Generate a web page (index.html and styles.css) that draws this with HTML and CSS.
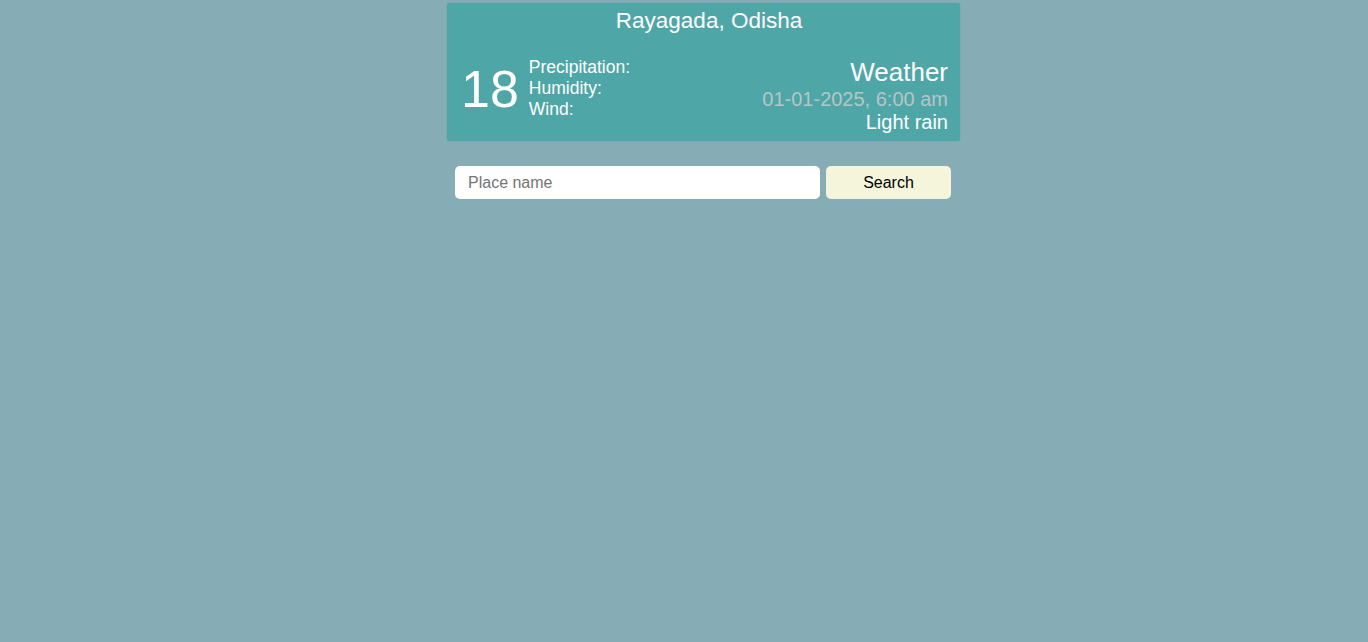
FILE: index.html
```html
<!DOCTYPE html>
<html>
<head>
<meta charset="utf-8">
<link rel="stylesheet" href="styles.css">
</head>
<body>
<div class="app">
  <div class="card">
    <div class="place">Rayagada, Odisha</div>
    <div class="body">
      <div class="temp">18</div>
      <div class="details">
        <div>Precipitation:</div>
        <div>Humidity:</div>
        <div>Wind:</div>
      </div>
      <div class="summary">
        <div class="title">Weather</div>
        <div class="date">01-01-2025, 6:00 am</div>
        <div class="desc">Light rain</div>
      </div>
    </div>
  </div>
  <form class="search" onsubmit="return false">
    <input class="field" type="text" placeholder="Place name">
    <button class="btn" type="submit">Search</button>
  </form>
</div>
</body>
</html>
```
FILE: styles.css
```css
html, body {
  margin: 0;
  padding: 0;
  background: #86adb6;
  font-family: "Liberation Sans", Arial, sans-serif;
  height: 100%;
}
.app {
  width: 513px;
  margin-left: 447px;
  padding-top: 3px;
}
.card {
  background: #4fa6a7;
  color: #ffffff;
  border-radius: 2px;
  box-shadow: 0 0 2px rgba(0,0,0,0.12);
  height: 138px;
  box-sizing: border-box;
  padding: 5px 12px 0 14px;
}
.place {
  font-size: 22.5px;
  line-height: 26px;
  text-align: center;
  padding-left: 9px;
}
.body {
  display: flex;
  align-items: flex-start;
  margin-top: 23px;
}
.temp {
  font-size: 52px;
  line-height: 60px;
  margin-top: 2px;
  margin-right: 11px;
}
.details {
  font-size: 17.5px;
  line-height: 21px;
  flex: 1;
  margin-left: -1px;
}
.summary {
  text-align: right;
}
.title {
  font-size: 26px;
  line-height: 30px;
  margin-top: 0;
}
.date {
  font-size: 20px;
  line-height: 24px;
  color: #b5c6c6;
}
.desc {
  font-size: 20px;
  line-height: 22px;
}
.search {
  display: flex;
  gap: 6px;
  margin: 25px 0 0 8px;
  width: 496px;
}
.field {
  flex: 1;
  height: 33px;
  box-sizing: border-box;
  border: none;
  border-radius: 5px;
  background: #fff;
  padding: 0 13px;
  font-family: "Liberation Sans", Arial, sans-serif;
  font-size: 16px;
  outline: none;
}
.field::placeholder {
  color: #757575;
}
.btn {
  width: 125px;
  height: 33px;
  border: none;
  border-radius: 5px;
  background: #f5f5dc;
  color: #000;
  font-family: "Liberation Sans", Arial, sans-serif;
  font-size: 16px;
  padding: 0;
}
```
